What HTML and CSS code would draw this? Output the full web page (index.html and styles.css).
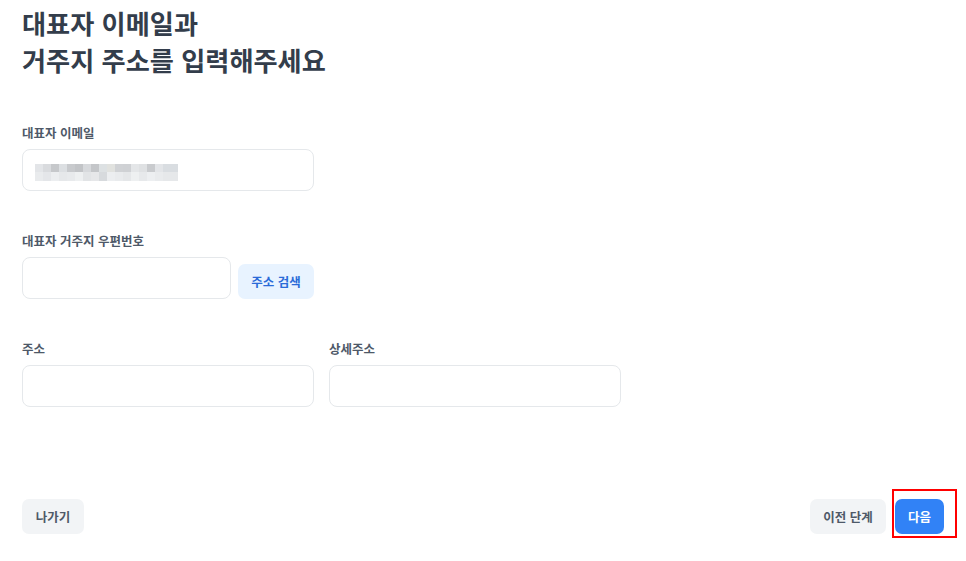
FILE: index.html
```html
<!DOCTYPE html>
<html lang="ko">
<head>
<meta charset="utf-8">
<title>대표자 정보</title>
<link rel="stylesheet" href="styles.css">
</head>
<body>
<main class="page">
  <h1 class="title">대표자 이메일과<br>거주지 주소를 입력해주세요</h1>

  <section class="field">
    <label class="label">대표자 이메일</label>
    <div class="input input-wide"><span class="blur"></span></div>
  </section>

  <section class="field">
    <label class="label">대표자 거주지 우편번호</label>
    <div class="row row-bottom">
      <div class="input input-zip"></div>
      <button class="btn btn-light">주소 검색</button>
    </div>
  </section>

  <section class="field">
    <div class="row row-gap">
      <div class="col">
        <label class="label">주소</label>
        <div class="input input-wide"></div>
      </div>
      <div class="col">
        <label class="label">상세주소</label>
        <div class="input input-wide"></div>
      </div>
    </div>
  </section>

  <footer class="footer">
    <button class="btn btn-gray btn-exit">나가기</button>
    <div class="actions">
      <button class="btn btn-gray btn-prev">이전 단계</button>
      <span class="highlight"><button class="btn btn-primary">다음</button></span>
    </div>
  </footer>
</main>
</body>
</html>
```

FILE: styles.css
```css
* { box-sizing: border-box; }
html, body { margin: 0; padding: 0; background: #ffffff; }
body {
  font-family: "Noto Sans CJK KR", "Noto Sans", sans-serif;
  color: #333d4b;
}
.page {
  width: 966px;
  height: 561px;
  padding: 5px 22px 0 22px;
}
.title {
  margin: 0;
  font-size: 26.2px;
  line-height: 37px;
  font-weight: 700;
  letter-spacing: 0;
  color: #333d4b;
}
.field { margin-top: 41px; }
.field:first-of-type { margin-top: 45px; }
.label {
  display: block;
  font-size: 12.5px;
  line-height: 18px;
  font-weight: 700;
  letter-spacing: 0;
  color: #4e5968;
  margin-bottom: 7px;
}
.input {
  height: 42px;
  border: 1px solid #e5e8eb;
  border-radius: 8px;
  background: #fff;
  display: flex;
  align-items: center;
  padding-left: 12px;
}
.input-wide { width: 292px; }
.input-zip { width: 209px; }
.row { display: flex; }
.row-bottom { align-items: flex-end; gap: 7px; }
.row-gap { gap: 15px; }
.col { display: flex; flex-direction: column; }
.blur {
  display: block;
  width: 143px;
  height: 17px;
  margin-top: 4px;
  background:
    linear-gradient(90deg,
      #e3e5e8 0 8px, #d9dbde 8px 16px, #c6c8cb 16px 24px, #dcdfe2 24px 32px,
      #c8cacd 32px 40px, #c2c4c7 40px 48px, #d7d9dc 48px 56px, #c4c6c9 56px 64px,
      #dde1e3 64px 72px, #e1e2df 72px 80px, #d0d2d5 80px 88px, #cfd1d4 88px 96px,
      #e4e6e8 96px 104px, #dfe1e3 104px 112px, #c9cbce 112px 120px, #e3e5e8 120px 128px,
      #d9dde1 128px 143px) top / 100% 8px no-repeat,
    linear-gradient(90deg,
      #e9ebed 0 8px, #e4e6e9 8px 16px, #eceef0 16px 24px, #e6e8ea 24px 32px,
      #e8eaec 32px 40px, #eef0f1 40px 48px, #e2e4e6 48px 56px, #e6e7e9 56px 64px,
      #d7dadd 64px 72px, #eceef0 72px 80px, #e9ebed 80px 88px, #e5e7e9 88px 96px,
      #eef0f1 96px 104px, #e7e9eb 104px 112px, #edeff1 112px 120px, #e9ebed 120px 128px,
      #e6e8ea 128px 143px) bottom / 100% 9px no-repeat;
}
.btn {
  height: 35px;
  padding: 0;
  border: none;
  border-radius: 7px;
  font-family: "Noto Sans CJK KR", "Noto Sans", sans-serif;
  font-size: 12.5px;
  font-weight: 700;
  letter-spacing: 0;
  cursor: pointer;
}
.btn-light { width: 76px; background: #e8f3ff; color: #2a6bd8; }
.btn-gray { background: #f2f4f6; color: #4e5968; }
.btn-exit { width: 62px; }
.btn-prev { width: 76px; }
.btn-primary { width: 49px; background: #3182f6; color: #ffffff; }
.footer {
  margin-top: 92px;
  display: flex;
  justify-content: space-between;
  align-items: center;
}
.actions { display: flex; gap: 9px; align-items: center; }
.highlight { position: relative; display: inline-flex; }
.highlight::after {
  content: "";
  position: absolute;
  top: -10px;
  left: -3px;
  right: -13px;
  bottom: -4px;
  border: 2px solid #ff0000;
  pointer-events: none;
}
```
